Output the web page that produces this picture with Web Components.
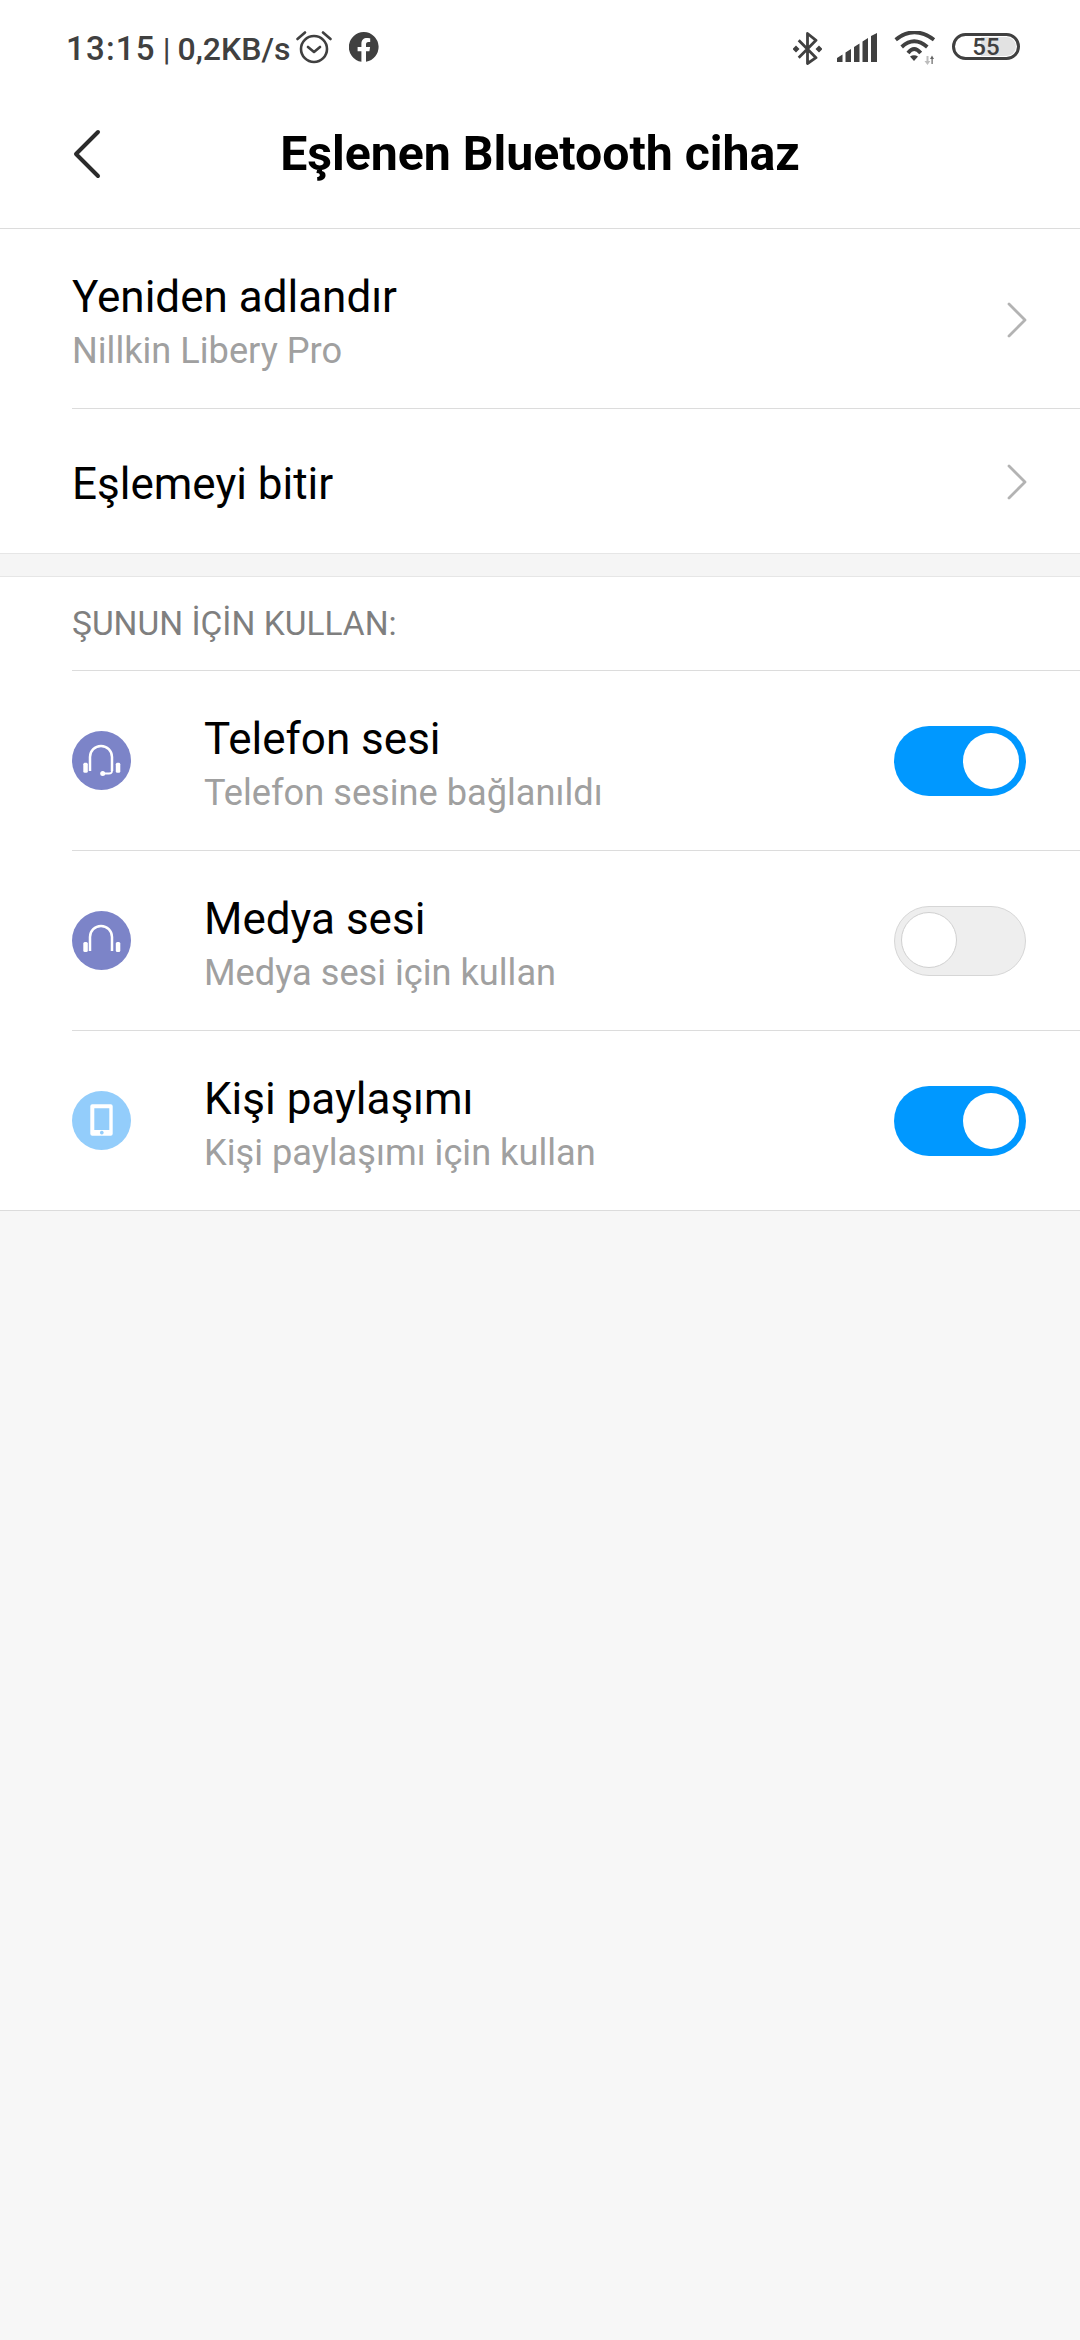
<!DOCTYPE html>
<html lang="tr"><head><meta charset="utf-8"><style>
html,body{margin:0;padding:0;background:#f7f7f7}
body{width:1080px;height:2340px;font-family:Roboto,"Noto Sans",sans-serif;overflow:hidden}
</style></head><body>
<status-bar></status-bar>
<title-bar>Eşlenen Bluetooth cihaz</title-bar>
<setting-card>
  <nav-row title="Yeniden adlandır" sub="Nillkin Libery Pro" h="180" divider></nav-row>
  <nav-row title="Eşlemeyi bitir" h="144"></nav-row>
</setting-card>
<band-gap></band-gap>
<setting-card bottom>
  <section-label>ŞUNUN İÇİN KULLAN:</section-label>
  <toggle-row title="Telefon sesi" sub="Telefon sesine bağlanıldı" icon="headset" on divider></toggle-row>
  <toggle-row title="Medya sesi" sub="Medya sesi için kullan" icon="headphones" divider></toggle-row>
  <toggle-row title="Kişi paylaşımı" sub="Kişi paylaşımı için kullan" icon="phone" on></toggle-row>
</setting-card>
<script>
function def(name, css, html){
  customElements.define(name, class extends HTMLElement{
    connectedCallback(){
      if(this.shadowRoot) return;
      const r=this.attachShadow({mode:'open'});
      r.innerHTML='<style>'+css+'</style>'+(typeof html==='function'?html(this):html);
    }
  });
}
const C='#404040';
def('status-bar',`
:host{display:flex;align-items:center;justify-content:space-between;height:96px;background:#fff;padding:0 60px 0 66px;width:1080px;box-sizing:border-box;color:${C}}
.l,.r{display:flex;align-items:center}
.t{font:500 32px/1 Roboto,sans-serif;white-space:nowrap;word-spacing:-1px}
.tm{font-size:33px;letter-spacing:1.200px}
.sep{font-weight:400}
svg{display:block;flex:none}
.bat{width:68px;height:27px;border:3.500px solid ${C};border-radius:14px;box-sizing:border-box;position:relative;display:flex;align-items:center;justify-content:center;margin-left:15px;margin-bottom:3px;font:500 24px/1 Roboto,sans-serif;color:${C};background:#fff}
.bat::before{content:"";position:absolute;left:42%;top:1px;bottom:1px;right:1px;background:#e2e2e2;border-radius:0 10px 10px 0}
.bat span{position:relative}
`,`<div class="l"><span class="t"><span class="tm">13:15</span> <span class="sep">|</span> 0,2KB/s</span>
<svg width="36" height="36" viewBox="0 0 36 36" style="margin-left:6px" fill="none" stroke="${C}" stroke-width="2.600"><circle cx="18" cy="19" r="13"/><path d="M12 17l6 5 6-5M1.500 9L9 2.500M34.500 9L27 2.500" stroke-linecap="round" stroke-linejoin="round"/></svg>
<svg width="30" height="30" viewBox="0 0 30 30" style="margin-left:17px;margin-bottom:2px"><path fill="${C}" d="M15 0a15 15 0 0 0-2.600 29.800V19.300H8.600V15h3.800v-3.300c0-3.800 2.200-5.800 5.600-5.800 1.700 0 3.200.3 3.200.3v3.700h-1.800c-1.800 0-2.400 1.100-2.400 2.300V15h4.100l-.7 4.300h-3.400v10.500A15 15 0 0 0 15 0z"/></svg></div>
<div class="r">
<svg width="29" height="33" viewBox="0 0 29 33" fill="none" stroke="${C}" stroke-width="2.800"><path d="M5.700 8.300L23 25.700 14.500 31.500V1.500L23 8.300 5.700 25.700" stroke-linejoin="round"/><path d="M3 13.500l3.500 3.500L3 20.500-.500 17zM26 13.500l3.500 3.500-3.500 3.500-3.500-3.500z" fill="${C}" stroke="none"/></svg>
<svg width="40" height="29" viewBox="0 0 40 29" style="margin-left:15px;margin-bottom:2px" fill="${C}"><path d="M0 29v-4l5.500-3.500V29zM8.500 29V19.500l5.500-3.500v13zM17 29V14l5.500-3.500V29zM25.500 29V8.500L31 5v24zM34 29V3l6-3v29z"/></svg>
<svg width="44" height="36" viewBox="0 0 44 36" style="margin-left:16px;margin-top:2px" fill="none" stroke="${C}" stroke-width="3.800"><path d="M2.700 8.700Q21-6.100 41 8.700M8.700 16Q21 4.600 34.300 16M15 22Q21 14 27.700 22"/><path d="M17 25.500Q21 23 25 25.500L21 30z" fill="${C}" stroke="none"/><path d="M33.500 25h2v5h1.800L34.500 34l-3-4h2z" fill="#bdbdbd" stroke="none"/><path d="M38.500 33v-5h-1.500l2-3.500 2 3.500h-1.300v5z" fill="#666" stroke="none"/></svg>
<div class="bat"><span>55</span></div>
</div>`);
def('title-bar',`
:host{display:flex;align-items:center;justify-content:center;position:relative;height:133px;background:#fff;border-bottom:1px solid #dcdcdc;box-sizing:border-box;width:1080px;padding-bottom:16px}
svg{position:absolute;left:73px;top:33px}
h1{margin:0;font:700 48.200px/1 Roboto,sans-serif;color:#000}
`,`<svg width="28" height="50" viewBox="0 0 28 50" fill="none" stroke="#2b2b2b" stroke-width="4" stroke-linecap="round" stroke-linejoin="round"><path d="M25 3L3 25l22 22"/></svg><h1><slot></slot></h1>`);
def('setting-card',`:host{display:block;background:#fff;width:1080px}:host([bottom]){border-bottom:1px solid #dcdcdc}`,`<slot></slot>`);
def('band-gap',`:host{display:block;box-sizing:border-box;height:24px;background:#f5f5f5;border-top:1.500px solid #e6e6e6;border-bottom:1.500px solid #e6e6e6;width:1080px}`,``);
const rowCss=`
:host{display:block;background:#fff;padding-left:72px;box-sizing:border-box;width:1080px}
.in{display:flex;align-items:center;box-sizing:border-box}
.tx{flex:1;display:flex;flex-direction:column;min-width:0;padding-top:6px}
.a{font:400 44px/58px Roboto,sans-serif;color:#000;white-space:nowrap}
.b{font:400 36.200px/50px Roboto,sans-serif;color:#a0a0a0;white-space:nowrap}
`;
def('nav-row',rowCss+`svg{margin-right:53px;margin-top:2px;flex:none}`,h=>{
  const H=h.getAttribute('h'),d=h.hasAttribute('divider');
  const sub=h.getAttribute('sub');
  return `<div class="in" style="height:${H}px;${d?'border-bottom:1px solid #dcdcdc':''}"><div class="tx"><div class="a">${h.getAttribute('title')}</div>${sub?`<div class="b">${sub}</div>`:''}</div>
  <svg width="20" height="36" viewBox="0 0 20 36" fill="none" stroke="#b3b3b3" stroke-width="2.800" stroke-linecap="round" stroke-linejoin="round"><path d="M2 2l16 16L2 34"/></svg></div>`;
});
def('section-label',`:host{display:block;margin-left:72px;height:94px;box-sizing:border-box;border-bottom:1px solid #dcdcdc;font:400 33.500px/93px Roboto,sans-serif;color:#7f7f7f;white-space:nowrap}`,`<slot></slot>`);
const ICONS={
headset:`<circle cx="29.500" cy="29.500" r="29.500" fill="#7c84c8"/><path d="M18 40V26a11 11 0 0 1 22 0v14" fill="none" stroke="#fff" stroke-width="2.500"/><rect x="11.300" y="31.700" width="4.500" height="10" rx="1.500" fill="#fff"/><rect x="43.800" y="31.700" width="4.500" height="10" rx="1.500" fill="#fff"/><path d="M31 42.500h6c2 0 3-1 3-2.500" fill="none" stroke="#fff" stroke-width="1.800"/><circle cx="30.700" cy="42.500" r="2.500" fill="#fff"/>`,
headphones:`<circle cx="29.500" cy="29.500" r="29.500" fill="#7c84c8"/><path d="M18 40V26a11 11 0 0 1 22 0v14" fill="none" stroke="#fff" stroke-width="2.500"/><rect x="11.300" y="31" width="4.500" height="10" rx="1.500" fill="#fff"/><rect x="43.800" y="31" width="4.500" height="10" rx="1.500" fill="#fff"/>`,
phone:`<circle cx="29.500" cy="29.500" r="29.500" fill="#93cdfb"/><path fill="#fff" fill-rule="evenodd" d="M20.300 13.300h18.400a2 2 0 0 1 2 2v27.400a2 2 0 0 1-2 2H20.300a2 2 0 0 1-2-2V15.300a2 2 0 0 1 2-2zm2 4V39h15V17.300zm7.500 22.400a1.900 1.900 0 1 0 .01 0z"/>`};
def('toggle-row',rowCss+`
.ic{width:59px;height:59px;margin-right:73px;flex:none;display:block}
.sw{width:132px;height:70px;border-radius:35px;margin-right:54px;flex:none;box-sizing:border-box;position:relative}
.sw.on{background:#0098ff}
.sw.off{background:#eeeeee;border:1.500px solid #d6d6d6}
.k{position:absolute;width:56px;height:56px;border-radius:50%;background:#fff;box-sizing:border-box}
.on .k{top:7px;right:7px}
.off .k{top:5.500px;left:5.500px;border:1.500px solid #d0d0d0}
`,h=>{
  const d=h.hasAttribute('divider');
  return `<div class="in" style="height:${d?180:179}px;${d?'border-bottom:1px solid #dcdcdc':''}"><svg class="ic" viewBox="0 0 59 59">${ICONS[h.getAttribute('icon')]}</svg>
  <div class="tx"><div class="a">${h.getAttribute('title')}</div><div class="b">${h.getAttribute('sub')}</div></div>
  <div class="sw ${h.hasAttribute('on')?'on':'off'}"><div class="k"></div></div></div>`;
});
</script>
</body></html>
